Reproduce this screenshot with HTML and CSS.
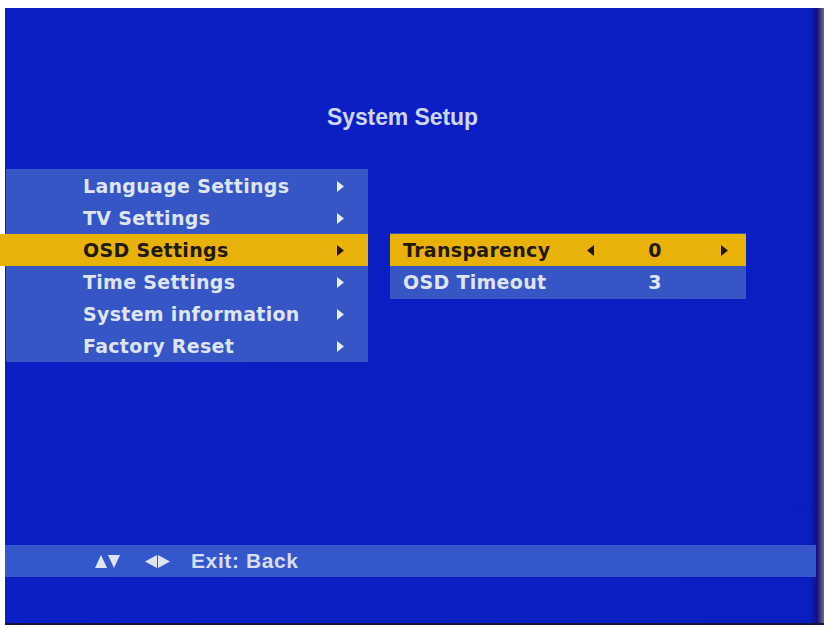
FILE: index.html
```html
<!DOCTYPE html>
<html>
<head>
<meta charset="utf-8">
<link rel="stylesheet" href="styles.css">
</head>
<body>
<div class="screen">
  <div class="title">System Setup</div>
  <div class="menus">
    <div class="main-menu">
      <div class="row"><span class="label">Language Settings</span><svg class="arrow" viewBox="0 0 7 11"><path d="M0 0L7 5.5L0 11Z"/></svg></div>
      <div class="row"><span class="label">TV Settings</span><svg class="arrow" viewBox="0 0 7 11"><path d="M0 0L7 5.5L0 11Z"/></svg></div>
      <div class="row active"><span class="label">OSD Settings</span><svg class="arrow" viewBox="0 0 7 11"><path d="M0 0L7 5.5L0 11Z"/></svg></div>
      <div class="row"><span class="label">Time Settings</span><svg class="arrow" viewBox="0 0 7 11"><path d="M0 0L7 5.5L0 11Z"/></svg></div>
      <div class="row"><span class="label">System information</span><svg class="arrow" viewBox="0 0 7 11"><path d="M0 0L7 5.5L0 11Z"/></svg></div>
      <div class="row"><span class="label">Factory Reset</span><svg class="arrow" viewBox="0 0 7 11"><path d="M0 0L7 5.5L0 11Z"/></svg></div>
    </div>
    <div class="sub-menu">
      <div class="srow active">
        <span class="label">Transparency</span>
        <svg class="arrow" viewBox="0 0 7 11"><path d="M7 0L0 5.5L7 11Z"/></svg>
        <span class="value">0</span>
        <svg class="arrow end" viewBox="0 0 7 11"><path d="M0 0L7 5.5L0 11Z"/></svg>
      </div>
      <div class="srow">
        <span class="label">OSD Timeout</span>
        <span></span>
        <span class="value">3</span>
        <span></span>
      </div>
    </div>
  </div>
  <div class="help">
    <svg class="key" viewBox="0 0 12 13"><path d="M6 0L12 13L0 13Z"/></svg>
    <svg class="key" viewBox="0 0 12 13"><path d="M0 0L12 0L6 13Z"/></svg>
    <svg class="key gap" viewBox="0 0 12 13"><path d="M12 0L12 13L0 6.5Z"/></svg>
    <svg class="key" viewBox="0 0 12 13"><path d="M0 0L12 6.5L0 13Z"/></svg>
    <span class="help-text">Exit: Back</span>
  </div>
</div>
</body>
</html>
```
FILE: styles.css
```css
html, body {
  margin: 0;
  padding: 0;
  background: #ffffff;
}
.screen {
  margin: 8px 0 0 5px;
  width: 819px;
  height: 615px;
  display: flex;
  flex-direction: column;
  background: linear-gradient(to right, #0c1fc4 0, #0b1ec2 calc(100% - 14px), #12127a calc(100% - 7px), #6a6a86 100%);
  border-bottom: 2px solid #151540;
  font-family: "DejaVu Sans", Verdana, sans-serif;
}
.title {
  padding: 95px 0 0 322px;
  font-family: "Liberation Sans", Arial, sans-serif;
  font-weight: bold;
  font-size: 23px;
  line-height: 28px;
  color: #cbd6f6;
  letter-spacing: -0.1px;
}
.menus {
  display: flex;
  align-items: flex-start;
  margin-top: 38px;
  margin-left: 1px;
}
.main-menu {
  width: 362px;
  padding-top: 1px;
  background: #3656c6;
}
.row {
  height: 32px;
  display: grid;
  grid-template-columns: 254px 7px;
  align-items: center;
  padding-left: 77px;
  color: #dfe4f2;
  font-weight: bold;
  font-size: 19px;
  letter-spacing: 0.3px;
}
.row .arrow {
  width: 7px;
  height: 11px;
  fill: #e8ecf8;
}
.active {
  background: #e9b208;
  color: #22190a;
}
.row.active {
  margin-left: -6px;
  padding-left: 83px;
}
.row.active .arrow, .srow.active .arrow {
  fill: #1e1608;
}
.sub-menu {
  margin-left: 22px;
  margin-top: 64px;
  width: 356px;
  padding: 1px 0 1px;
  background: #3656c6;
}
.srow {
  height: 32px;
  display: grid;
  grid-template-columns: 184px 9px 118px 14px;
  align-items: center;
  padding-left: 13px;
  color: #dfe4f2;
  font-weight: bold;
  font-size: 19px;
  letter-spacing: 0.3px;
}
.srow.active {
  color: #22190a;
}
.srow .arrow {
  width: 7px;
  height: 11px;
}
.srow .arrow.end {
  justify-self: end;
}
.value {
  text-align: center;
}
.help {
  margin-top: auto;
  margin-bottom: 46px;
  margin-right: 8px;
  height: 32px;
  background: #3458cc;
  display: flex;
  align-items: center;
  padding-left: 90px;
  color: #d8def4;
}
.key {
  width: 12px;
  height: 13px;
  fill: #dfe3f4;
  margin-right: 1px;
}
.key.gap {
  margin-left: 24px;
}
.help-text {
  margin-left: 20px;
  font-family: "Liberation Sans", Arial, sans-serif;
  font-weight: bold;
  font-size: 21px;
  letter-spacing: 0.6px;
}
```
